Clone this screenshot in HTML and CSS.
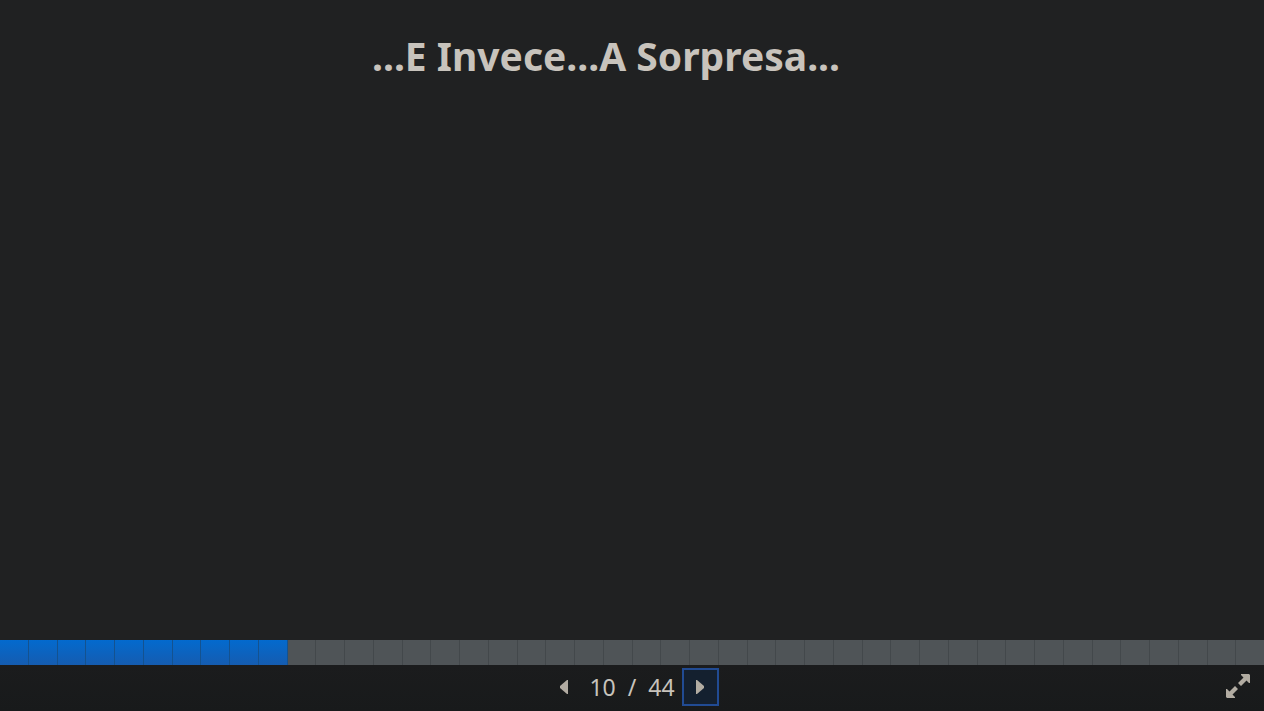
FILE: index.html
```html
<!DOCTYPE html>
<html lang="it">
<head>
<meta charset="utf-8">
<title>...E Invece...A Sorpresa...</title>
<link rel="stylesheet" href="styles.css">
</head>
<body>
<main class="slide">
  <h1 class="slide-title">...E Invece...A Sorpresa...</h1>
</main>
<footer class="player">
  <div class="progress" id="progress"></div>
  <nav class="controls">
    <div class="pager">
      <button class="nav-button" type="button" aria-label="Previous slide">
        <svg class="arrow" viewBox="0 0 8 14"><path d="M8 0v14H7L0 8V6L7 0z"/></svg>
      </button>
      <span class="count"><span>10</span><span>/</span><span>44</span></span>
      <button class="nav-button nav-button-active" type="button" aria-label="Next slide">
        <svg class="arrow" viewBox="0 0 8 14"><path d="M0 0v14h1l7-6V6L1 0z"/></svg>
      </button>
    </div>
    <button class="fullscreen" type="button" aria-label="Fullscreen">
      <svg class="expand" viewBox="0 0 24 24"><path d="M15 0h8l1 1v8h-1l-2.500-2.500-5.500 5.500-3-3 5.500-5.500L15 1zM9 24H1l-1-1v-8h1l2.500 2.500L9 12l3 3-5.500 5.500L9 23z"/></svg>
    </button>
  </nav>
</footer>
<script src="player.js"></script>
</body>
</html>
```
FILE: styles.css
```css
* { box-sizing: border-box; }

body {
  margin: 0;
  min-height: 100vh;
  display: flex;
  flex-direction: column;
  background: #202122;
  color: #c8c3bc;
  font-family: "Noto Sans", sans-serif;
}

.slide {
  flex: 1;
  padding: 28px 52px 0 0;
}

.slide-title {
  margin: 0;
  font-size: 39px;
  line-height: 56px;
  font-weight: 700;
  text-align: center;
}

.progress {
  display: flex;
  height: 25px;
}

.step {
  flex: 1;
  border-right: 1px solid #43484b;
  background: #4f5457;
}

.step:last-child { border-right: 0; }

.step-done {
  border-right-color: #14528f;
  background: linear-gradient(#036ace, #155cb0);
}

.controls {
  display: grid;
  grid-template-columns: 1fr auto 1fr;
  align-items: center;
  height: 46px;
  padding-bottom: 2px;
  background: linear-gradient(#1b1c1d, #181a1b);
}

.pager {
  grid-column: 2;
  display: flex;
  align-items: center;
}

.nav-button {
  width: 37px;
  height: 38px;
  padding: 0;
  border: 2px solid transparent;
  background: transparent;
  display: flex;
  align-items: center;
  justify-content: center;
}

.nav-button-active {
  border-color: #214b93;
  background: #14202f;
}

.arrow {
  width: 8px;
  height: 14px;
  fill: #b2aca2;
}

.count {
  display: flex;
  gap: 12px;
  padding: 0 7px;
  font-size: 23px;
  line-height: 32px;
}

.fullscreen {
  justify-self: end;
  margin: 0 14px 2px 0;
  padding: 0;
  border: 0;
  background: transparent;
}

.expand {
  display: block;
  width: 24px;
  height: 24px;
  fill: #b2aca2;
}
```
FILE: player.js
```js
const progress = document.getElementById("progress");
for (let n = 1; n <= 44; n++) {
  const step = document.createElement("a");
  step.className = n <= 10 ? "step step-done" : "step";
  step.href = "#" + n;
  step.setAttribute("aria-label", "Slide " + n);
  progress.append(step);
}
```
